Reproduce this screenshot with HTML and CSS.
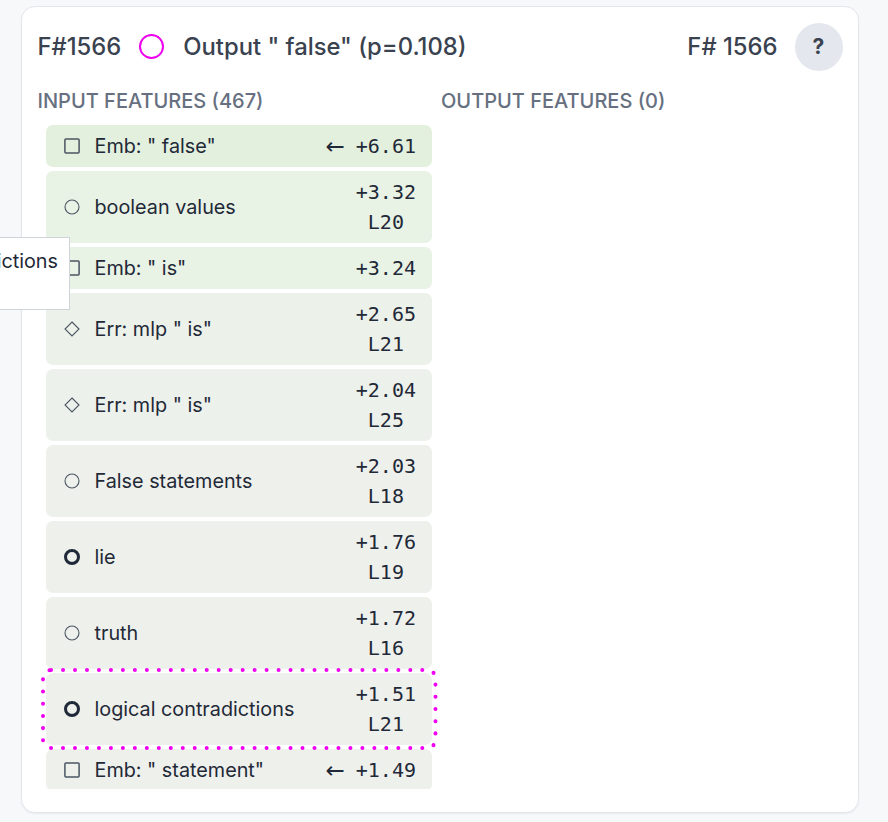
FILE: index.html
```html
<!DOCTYPE html>
<html>
<head>
<meta charset="utf-8">
<link rel="stylesheet" href="styles.css">
</head>
<body>
<div class="page">
  <div class="card">
    <div class="title-row">
      <div class="title-left">
        <span class="fid">F#1566</span>
        <span class="node-circle"></span>
        <span class="out">Output " false" (p=0.108)</span>
      </div>
      <div class="title-right">
        <span class="fid">F# 1566</span>
        <span class="help">?</span>
      </div>
    </div>
    <div class="cols">
      <div class="col">
        <div class="col-head">Input Features (467)</div>
        <div class="list">
          <div class="row short g1">
            <svg class="ico" viewBox="0 0 16 16"><rect x="0.9" y="0.9" width="14.2" height="14.2" rx="1" fill="none" stroke="#4b5563" stroke-width="1.5"/></svg>
            <span class="label">Emb: " false"</span>
            <span class="val"><span class="arrow">←</span><span class="num">+6.61</span></span>
          </div>
          <div class="row g2">
            <svg class="ico" viewBox="0 0 16 16"><circle cx="8" cy="8" r="7" fill="none" stroke="#4b5563" stroke-width="1.1"/></svg>
            <span class="label">boolean values</span>
            <span class="val stack"><span class="num">+3.32</span><span class="num">L20</span></span>
          </div>
          <div class="row short g3">
            <svg class="ico" viewBox="0 0 16 16"><rect x="0.9" y="0.9" width="14.2" height="14.2" rx="1" fill="none" stroke="#4b5563" stroke-width="1.5"/></svg>
            <span class="label">Emb: " is"</span>
            <span class="val"><span class="num">+3.24</span></span>
          </div>
          <div class="row g4">
            <svg class="ico" viewBox="0 0 16 16"><path d="M8 1 L15 8 L8 15 L1 8 Z" fill="none" stroke="#4b5563" stroke-width="1.1"/></svg>
            <span class="label">Err: mlp " is"</span>
            <span class="val stack"><span class="num">+2.65</span><span class="num">L21</span></span>
          </div>
          <div class="row g5">
            <svg class="ico" viewBox="0 0 16 16"><path d="M8 1 L15 8 L8 15 L1 8 Z" fill="none" stroke="#4b5563" stroke-width="1.1"/></svg>
            <span class="label">Err: mlp " is"</span>
            <span class="val stack"><span class="num">+2.04</span><span class="num">L25</span></span>
          </div>
          <div class="row g6">
            <svg class="ico" viewBox="0 0 16 16"><circle cx="8" cy="8" r="7" fill="none" stroke="#4b5563" stroke-width="1.1"/></svg>
            <span class="label">False statements</span>
            <span class="val stack"><span class="num">+2.03</span><span class="num">L18</span></span>
          </div>
          <div class="row g6">
            <svg class="ico" viewBox="0 0 16 16"><circle cx="8" cy="8" r="6.5" fill="none" stroke="#1f2937" stroke-width="3"/></svg>
            <span class="label">lie</span>
            <span class="val stack"><span class="num">+1.76</span><span class="num">L19</span></span>
          </div>
          <div class="row g6">
            <svg class="ico" viewBox="0 0 16 16"><circle cx="8" cy="8" r="7" fill="none" stroke="#4b5563" stroke-width="1.1"/></svg>
            <span class="label">truth</span>
            <span class="val stack"><span class="num">+1.72</span><span class="num">L16</span></span>
          </div>
          <div class="row g6 selected">
            <svg class="ico" viewBox="0 0 16 16"><circle cx="8" cy="8" r="6.5" fill="none" stroke="#1f2937" stroke-width="3"/></svg>
            <span class="label">logical contradictions</span>
            <span class="val stack"><span class="num">+1.51</span><span class="num">L21</span></span>
            <svg class="sel-outline" viewBox="0 0 394 80" preserveAspectRatio="none"><rect x="2" y="2" width="390" height="76" rx="8" fill="none" stroke="#f000f0" stroke-width="4" stroke-linecap="round" stroke-dasharray="0 11.9"/></svg>
          </div>
          <div class="row short g6">
            <svg class="ico" viewBox="0 0 16 16"><rect x="0.9" y="0.9" width="14.2" height="14.2" rx="1" fill="none" stroke="#4b5563" stroke-width="1.5"/></svg>
            <span class="label">Emb: " statement"</span>
            <span class="val"><span class="arrow">←</span><span class="num">+1.49</span></span>
          </div>
        </div>
      </div>
      <div class="col">
        <div class="col-head">Output Features (0)</div>
      </div>
    </div>
  </div>
  <div class="tooltip">logical contradictions</div>
</div>
</body>
</html>
```
FILE: styles.css
```css
* { box-sizing: border-box; }
html, body { margin: 0; padding: 0; }
body {
  background: #f7f8fa;
  font-family: Inter, "Noto Sans", sans-serif;
  color: #1f2937;
}
.page {
  position: relative;
  width: 888px;
  height: 822px;
  padding: 6px 0 0 21px;
  overflow: hidden;
}
.card {
  width: 838px;
  height: 807px;
  background: #ffffff;
  border: 1.5px solid #e3e7ec;
  border-radius: 14px;
  box-shadow: 0 1px 2px rgba(15, 23, 42, 0.06);
  padding: 15.5px 15.5px 0 15.5px;
}
.title-row {
  display: flex;
  align-items: center;
  justify-content: space-between;
  height: 48px;
}
.title-left, .title-right {
  display: flex;
  align-items: center;
}
.fid, .out {
  font-size: 23.8px;
  font-weight: 500;
  color: #3a4250;
}
.node-circle {
  width: 25px;
  height: 25px;
  border: 2.6px solid #ee00ee;
  border-radius: 50%;
  margin: 0 19px 0 18px;
}
.help {
  width: 48px;
  height: 48px;
  border-radius: 50%;
  background: #e4e7ed;
  margin-left: 17px;
  display: flex;
  align-items: center;
  justify-content: center;
  font-size: 21px;
  font-weight: 700;
  color: #3a4250;
}
.cols {
  display: grid;
  grid-template-columns: 1fr 1fr;
  margin-top: 18px;
}
.col-head {
  font-size: 20px;
  font-weight: 500;
  text-transform: uppercase;
  color: #667080;
  line-height: 24px;
  margin-bottom: 12px;
}
.col:last-child .col-head { padding-left: 1px; }
.list {
  display: flex;
  flex-direction: column;
  gap: 4px;
  height: 664px;
  overflow: hidden;
}
.row {
  position: relative;
  display: flex;
  align-items: center;
  margin: 0 8px;
  padding: 6px 16px 6px 18px;
  min-height: 72px;
  border-radius: 7px;
  flex-shrink: 0;
}
.row.short { min-height: 42px; }
.g1 { background: #e3f0de; }
.g2 { background: #e8f2e5; }
.g3 { background: #e8f2e5; }
.g4 { background: #ecf1ea; }
.g5 { background: #edf1eb; }
.g6 { background: #eef0ec; }
.ico {
  width: 16px;
  height: 16px;
  flex-shrink: 0;
  margin-right: 15px;
}
.label {
  flex: 1;
  font-size: 19.8px;
  color: #1f2937;
}
.val {
  display: flex;
  align-items: center;
}
.val.stack {
  flex-direction: column;
  align-items: center;
}
.num {
  font-family: "DejaVu Sans Mono", "Liberation Mono", monospace;
  font-size: 20px;
  line-height: 30px;
  color: #1f2937;
}
.arrow {
  font-family: "DejaVu Sans", sans-serif;
  font-size: 23px;
  line-height: 30px;
  color: #1f2937;
  margin-right: 11px;
}
.selected { z-index: 2; }
.sel-outline {
  position: absolute;
  left: -5px;
  top: -5px;
  width: calc(100% + 10px);
  height: calc(100% + 10px);
  overflow: visible;
  pointer-events: none;
}
.tooltip {
  position: absolute;
  right: 818px;
  top: 237px;
  height: 73px;
  background: #ffffff;
  border: 1.5px solid #cfd4da;
  padding: 11px 11px 0 14px;
  font-size: 19.8px;
  white-space: nowrap;
  color: #1f2937;
  z-index: 5;
}
```
